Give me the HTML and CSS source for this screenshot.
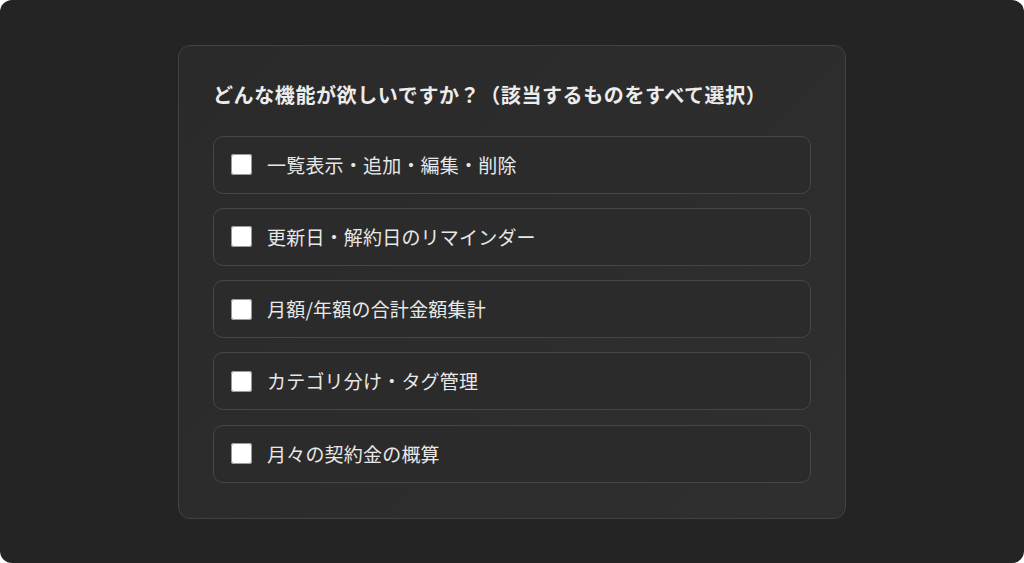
FILE: index.html
```html
<!DOCTYPE html>
<html lang="ja">
<head>
<meta charset="utf-8">
<link rel="stylesheet" href="styles.css">
</head>
<body>
<main class="stage">
  <section class="card">
    <h1 class="title">どんな機能が欲しいですか？（該当するものをすべて選択）</h1>
    <div class="options">
      <label class="option"><span class="box"></span><span class="label">一覧表示・追加・編集・削除</span></label>
      <label class="option"><span class="box"></span><span class="label">更新日・解約日のリマインダー</span></label>
      <label class="option"><span class="box"></span><span class="label">月額/年額の合計金額集計</span></label>
      <label class="option"><span class="box"></span><span class="label">カテゴリ分け・タグ管理</span></label>
      <label class="option"><span class="box"></span><span class="label">月々の契約金の概算</span></label>
    </div>
  </section>
</main>
</body>
</html>
```
FILE: styles.css
```css
html { background: #ffffff; margin: 0; padding: 0; }
body {
  margin: 0;
  width: 1024px;
  height: 563px;
  overflow: hidden;
  font-family: "Noto Sans CJK JP", "Noto Sans", sans-serif;
}
.stage {
  width: 1024px;
  height: 563px;
  background: #242424;
  border-radius: 12px;
  display: flex;
  align-items: center;
  justify-content: center;
}
.card {
  box-sizing: border-box;
  width: 668px;
  height: 474px;
  border: 1px solid #424242;
  border-radius: 12px;
  background: linear-gradient(135deg, #2a2a2a 0%, #2f2f2f 100%);
  padding: 34px;
  display: flex;
  flex-direction: column;
}
.title {
  margin: 0 0 27px 0;
  font-size: 20px;
  line-height: 29px;
  font-weight: 700;
  color: #ececec;
  letter-spacing: 0.6px;
}
.options {
  display: flex;
  flex-direction: column;
  gap: 14.25px;
}
.option {
  box-sizing: border-box;
  height: 58px;
  border: 1px solid #474747;
  border-radius: 10px;
  background: #2b2b2b;
  display: flex;
  align-items: center;
  padding-left: 17px;
  gap: 15px;
}
.box {
  width: 21px;
  height: 21px;
  background: #ffffff;
  border-radius: 3px;
  box-shadow: inset 0 0 0 1px #9a9a9a;
  flex: none;
}
.label {
  font-size: 19px;
  color: #e8e8e8;
  line-height: 26px;
  letter-spacing: 0.2px;
}
```
